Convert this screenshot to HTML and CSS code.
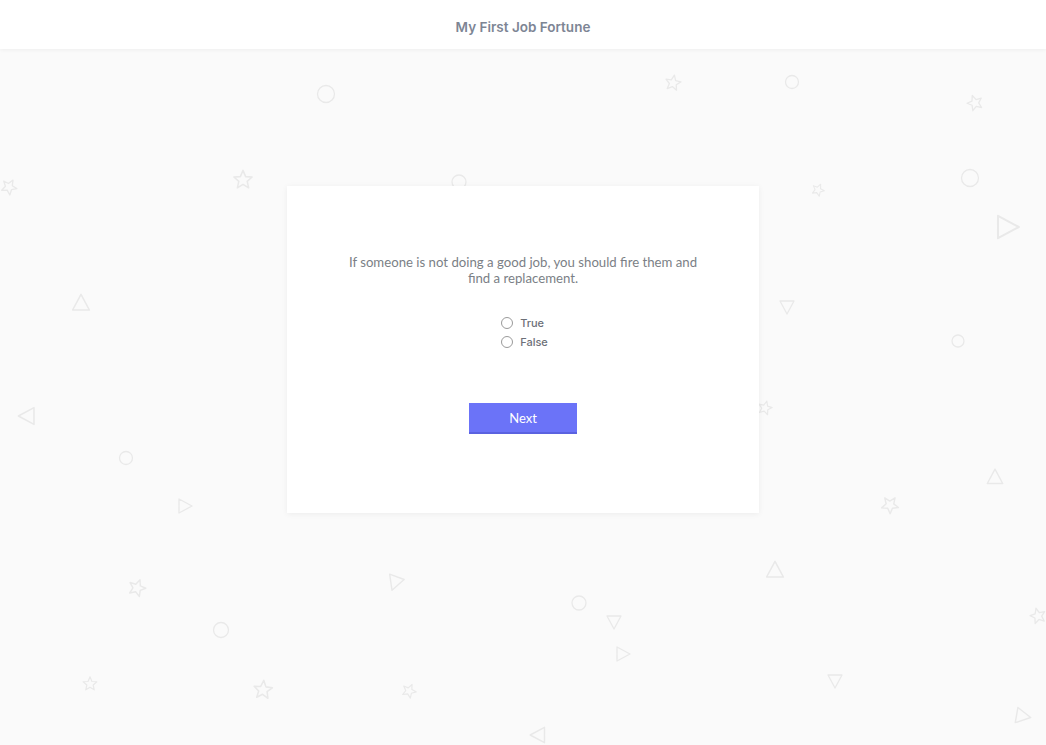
FILE: index.html
```html
<!DOCTYPE html>
<html>
<head>
<meta charset="utf-8">
<link rel="stylesheet" href="styles.css">
</head>
<body>
<header class="topbar"><span class="title">My First Job Fortune</span></header>
<main class="stage">
  <svg class="deco" width="1046" height="745" viewBox="0 0 1046 745" fill="none" stroke="#e9e9e9" stroke-width="1.3" stroke-linejoin="round">
    <defs>
      <path id="star" d="M0,-8 L2.2,-2.8 L7.6,-2.5 L3.5,1.1 L4.7,6.5 L0,3.6 L-4.7,6.5 L-3.5,1.1 L-7.6,-2.5 L-2.2,-2.8 Z"/>
      <path id="tri" d="M0,-8 L7,5 L-7,5 Z"/>
    </defs>
    <circle cx="326" cy="94" r="8.5"/>
    <circle cx="792" cy="82" r="6.5"/>
    <circle cx="970" cy="178" r="8.5"/>
    <circle cx="459" cy="182" r="7"/>
    <circle cx="958" cy="341" r="6"/>
    <circle cx="126" cy="458" r="6.5"/>
    <circle cx="579" cy="603" r="7"/>
    <circle cx="221" cy="630" r="7.5"/>
    <use href="#star" transform="translate(673,83) rotate(10)"/>
    <use href="#star" transform="translate(975,103) rotate(-20)"/>
    <use href="#star" transform="translate(9,187) rotate(30)"/>
    <use href="#star" transform="translate(243,180) scale(1.2)"/>
    <use href="#star" transform="translate(818,190) rotate(25) scale(0.8)"/>
    <use href="#star" transform="translate(765,408) rotate(15) scale(0.9)"/>
    <use href="#star" transform="translate(890,505) rotate(35) scale(1.1)"/>
    <use href="#star" transform="translate(137,588) rotate(20) scale(1.1)"/>
    <use href="#star" transform="translate(1038,616) rotate(-15)"/>
    <use href="#star" transform="translate(90,684) scale(0.9)"/>
    <use href="#star" transform="translate(263,690) rotate(5) scale(1.2)"/>
    <use href="#star" transform="translate(409,691) rotate(25) scale(0.9)"/>
    <use href="#tri" transform="translate(1006,227) rotate(90) scale(1.6)"/>
    <use href="#tri" transform="translate(81,304) scale(1.2)"/>
    <use href="#tri" transform="translate(787,306) rotate(180)"/>
    <use href="#tri" transform="translate(28,416) rotate(-90) scale(1.2)"/>
    <use href="#tri" transform="translate(184,506) rotate(90)"/>
    <use href="#tri" transform="translate(995,478) scale(1.1)"/>
    <use href="#tri" transform="translate(395,582) rotate(200) scale(1.1)"/>
    <use href="#tri" transform="translate(775,571) scale(1.2)"/>
    <use href="#tri" transform="translate(614,621) rotate(180)"/>
    <use href="#tri" transform="translate(622,654) rotate(90)"/>
    <use href="#tri" transform="translate(835,680) rotate(180)"/>
    <use href="#tri" transform="translate(1022,716) rotate(100) scale(1.1)"/>
    <use href="#tri" transform="translate(539,735) rotate(-90) scale(1.1)"/>
  </svg>
  <section class="card">
    <p class="question">If someone is not doing a good job, you should fire them and find a replacement.</p>
    <div class="options">
      <label class="option"><span class="radio"></span><span class="opt-text">True</span></label>
      <label class="option"><span class="radio"></span><span class="opt-text">False</span></label>
    </div>
    <button class="next">Next</button>
  </section>
</main>
</body>
</html>
```
FILE: styles.css
```css
* { box-sizing: border-box; }
html, body { margin: 0; padding: 0; }
body {
  width: 1046px;
  height: 745px;
  overflow: hidden;
  background: #fafafa;
  font-family: "Inter", "Liberation Sans", sans-serif;
}
.topbar {
  position: relative;
  z-index: 2;
  height: 49px;
  background: #ffffff;
  box-shadow: 0 1px 4px rgba(0,0,0,0.05);
  display: flex;
  align-items: center;
  justify-content: center;
}
.title {
  font-size: 13.5px;
  font-weight: 600;
  color: #7d8594;
  padding-top: 5px;
}
.stage {
  position: relative;
  height: 696px;
  display: flex;
  flex-direction: column;
  align-items: center;
  padding-top: 137px;
}
.deco {
  position: absolute;
  left: 0;
  top: -49px;
}
.card {
  position: relative;
  z-index: 1;
  width: 472px;
  height: 327px;
  background: #ffffff;
  box-shadow: 0 1px 6px rgba(0,0,0,0.06);
  display: flex;
  flex-direction: column;
  align-items: center;
  padding-top: 68px;
}
.question {
  margin: 0;
  width: 352px;
  text-align: center;
  font-family: "Lato", "Liberation Sans", sans-serif;
  font-size: 13.2px;
  line-height: 16px;
  color: #7b7f86;
}
.options {
  margin-top: 30px;
  display: flex;
  flex-direction: column;
  gap: 6px;
  margin-left: 3px;
}
.option {
  display: flex;
  align-items: center;
  gap: 7px;
  height: 13px;
}
.radio {
  width: 12px;
  height: 12px;
  border: 1px solid #9a9a9a;
  border-radius: 50%;
  background: #fff;
}
.opt-text {
  font-size: 11px;
  font-weight: 500;
  color: #6d7078;
}
.next {
  margin-top: 55px;
  width: 108px;
  height: 31px;
  border: none;
  border-bottom: 2px solid #5a62e0;
  background: #6b73f8;
  color: #ffffff;
  font-family: "Lato", "Liberation Sans", sans-serif;
  font-size: 13px;
  padding: 0;
}
```
